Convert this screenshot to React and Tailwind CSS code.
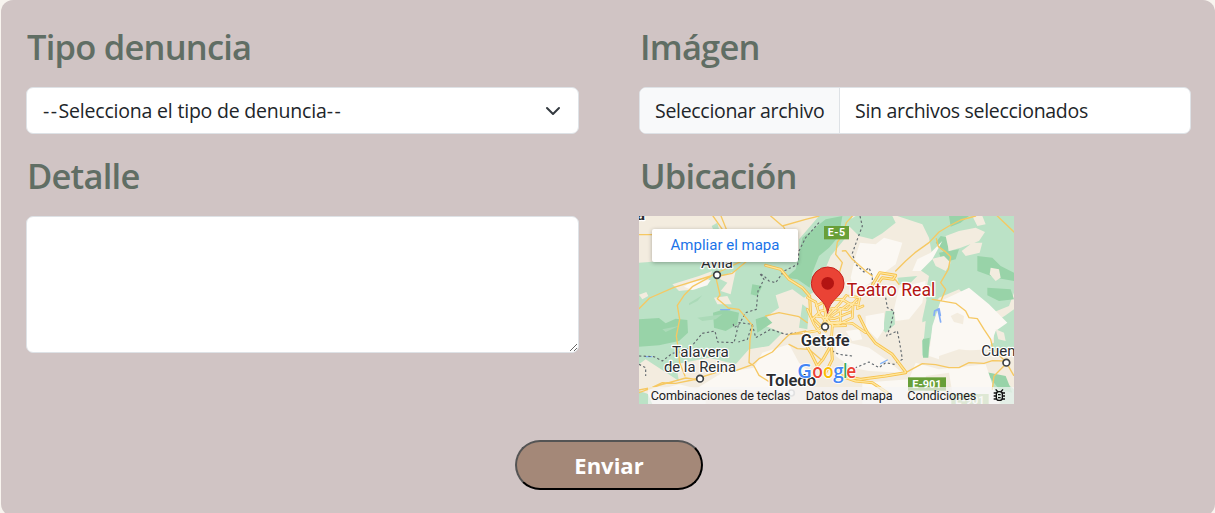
const roads = [
  "M222 0 L250 40 M246 0 L262 40 M0 56 H60 M395 0 L430 30 L500 10 L540 0 M432 30 L450 60",
  "M0 278 L32 246 L105 214 L215 180 L330 125 M232 190 L243 237 L235 248 L268 276 L300 280 L340 328 L333 372 L330 440 L345 450 L360 478 L395 500",
  "M215 182 L160 212 L135 238 L115 268 L122 310 L112 360 L118 400 L122 440 L138 480",
  "M0 522 L40 514 L70 500 L110 502 L160 492 L230 470 L290 464 L340 446 L360 428 L400 408 L430 376 L450 356 L500 345",
  "M0 530 L60 508 L140 486 L180 492 M380 300 L420 290 L480 302 L505 320 M450 356 L500 352 L520 345 M450 385 L475 398 L510 400 L545 430",
  "M640 0 L622 20 L610 60 L595 78 L590 115 L610 140 L598 180 L585 200",
  "M610 105 L620 104 L640 130 L680 165 L700 180 M740 185 L770 192 L780 205",
  "M1010 0 L965 12 L930 30 L900 48 L870 80 L828 110 L800 135 L770 165 M892 68 L898 92 L918 106 L935 122 L928 160 L905 200 L920 220 L907 252",
  "M880 250 L950 262 L980 285 L990 305 L1015 308 L1035 340 L1055 370 L1062 400 L1095 432",
  "M800 470 L850 443 L890 446 L930 455 L960 455 L990 440 L1035 442 L1060 434 L1095 435 M1100 445 L1065 480 L1060 520 M1105 445 L1124 478 M1075 0 L1125 48",
  "M240 180 L280 172 L330 130",
];

const trunks = [
  "M380 148 L425 160 L450 190 L490 215 L512 240 L515 300 L560 345",
  "M700 208 L722 170 L770 178 L762 190 L730 185 L708 215",
  "M660 300 L685 350 L710 382 L760 415 L800 468",
  "M800 470 L740 480 L665 490 L600 478 M600 478 L650 495 L700 500 L745 530",
  "M575 362 L580 430 L560 470 M575 390 L552 430 L535 450",
  "M535 450 L515 410 L500 385",
];

const ring = [
  "M505 245 L530 258 L540 292 L562 318 L600 324 L640 305 L642 270 L610 250 L565 252 L532 270",
  "M520 310 L545 285 L580 278 L625 280 L654 250 M545 335 L568 298 L600 265 L622 238",
  "M500 350 L530 345 L560 325 L595 318 L640 322 L680 350 M530 300 L585 308 L635 288",
  "M556 264 L560 305 L584 330 L620 329 M604 277 L604 322 M578 300 L630 263 L655 265",
  "M630 240 L662 245 L655 278 L672 270 M505 280 L525 325 L542 350 M580 330 L576 390",
];

const borders = [
  "M540 20 L500 65 L480 105 L476 145 L435 165 L410 200 L390 195 L375 180 L362 172 L375 190 L357 225 L352 280 L320 290 L300 325 L285 335 L282 320",
  "M663 0 L670 30 L655 70 L640 112 L650 145 L675 168 L690 155 L700 180 L700 205",
  "M740 245 L745 275 L765 285 L755 330 L743 360 L775 345 L782 380 L790 430 L765 445 L740 440 L720 455 L690 438 L650 455",
  "M0 420 L45 422 L70 435 L100 412 L140 404 L165 382 L190 352 L228 345 L236 378 L285 380 L300 320 L340 325 L350 365 L395 340 L440 355 L470 350 M545 380 L570 400 L600 415 L640 420",
  "M340 325 L325 370 L298 378 M0 445 L20 455 L20 480",
];

const darkGreens = [
  "M0 310 L60 306 L80 322 L110 308 L145 312 L147 350 L120 375 L60 388 L0 392 Z",
  "M222 290 L255 280 L300 290 L295 325 L260 345 L225 335 Z",
  "M490 65 L560 10 L610 0 L600 60 L570 95 L540 120 L520 170 L512 215 L475 190 L440 185 L470 160 L480 120 Z",
  "M340 205 L370 210 L355 240 L335 235 Z",
  "M900 110 L960 100 L950 130 L910 140 Z",
  "M1015 120 L1060 125 L1085 150 L1125 170 V195 L1070 185 L1015 165 Z",
  "M1045 215 L1115 220 L1125 250 L1080 255 L1045 238 Z",
  "M930 0 H990 L965 20 L935 32 Z",
  "M905 60 L930 65 L925 120 L890 80 Z",
  "M850 370 L872 365 L868 425 L852 425 Z",
  "M1040 468 L1100 480 L1120 530 L1080 520 Z",
  "M350 310 L380 300 L400 320 L355 350 Z",
];

const greens = [
  "M0 140 L70 135 L240 130 L375 128 L480 128 L480 70 L540 0 H640 L620 65 L575 120 L550 180 L530 225 L495 245 L460 220 L410 238 L420 275 L385 300 L380 330 L430 350 L390 390 L330 400 L290 445 L210 425 L110 445 L120 495 L20 430 L0 445 Z",
  "M775 0 H1125 V230 L1110 270 L1060 290 L1000 260 L960 220 L900 245 L875 280 L858 240 L870 180 L840 160 L880 120 L870 65 L850 25 Z",
  "M620 20 L650 0 H760 L770 20 L730 52 L700 70 L660 60 Z",
  "M218 30 L235 20 L240 40 L225 46 Z",
  "M865 240 L905 255 L885 320 L870 395 L850 420 L850 310 Z",
  "M740 285 L765 285 L768 325 L740 350 L732 342 Z",
  "M775 185 L835 180 L810 205 L780 205 Z",
  "M1065 320 L1100 298 L1125 280 V400 L1050 405 L1050 385 L1065 380 Z",
  "M490 265 L510 280 L505 340 L480 335 Z",
  "M1035 470 L1070 475 L1125 520 V564 H1085 L1065 520 Z",
  "M0 525 L30 535 L45 564 H0 Z",
];

const pales = [
  "M135 212 L160 196 L215 192 L205 208 L160 222 Z",
  "M663 80 L710 85 L735 65 L790 80 L770 145 L715 185 L650 230 L635 185 L650 120 Z",
  "M835 130 L875 110 L910 75 L880 130 L845 165 L820 165 Z",
  "M780 215 L860 195 L850 260 L810 310 L770 315 L765 280 Z",
  "M905 255 L990 215 L1050 265 L1105 320 L1070 345 L1050 400 L960 405 L900 430 L870 420 L880 330 Z",
  "M680 300 L735 290 L735 340 L715 370 L680 335 Z",
  "M370 410 L450 385 L480 440 L520 475 L450 530 L290 520 L160 525 L250 470 L345 455 Z",
  "M590 370 L690 395 L740 430 L790 470 L690 465 L640 455 L590 420 Z",
  "M670 500 L810 490 L830 440 L900 460 L1040 445 L1080 564 H670 Z",
  "M25 530 L120 505 L200 525 V564 H40 Z",
  "M620 345 L660 340 L670 370 L640 375 Z",
];

const beiges = [
  "M235 185 L290 165 L275 235 L245 225 L265 200 Z",
  "M225 245 L265 240 L278 265 L235 265 Z",
  "M0 236 L22 228 L28 240 L10 250 Z",
  "M100 205 L180 180 L220 165 L205 200 L170 220 L120 225 Z",
  "M740 50 L810 20 L850 45 L850 80 L780 90 L735 80 Z",
  "M920 60 L960 45 L1010 35 L1038 48 L1020 75 L965 95 L930 105 Z",
  "M968 105 L1000 80 L1030 80 L1022 110 L980 120 Z",
  "M880 128 L915 120 L935 140 L920 165 L890 150 Z",
  "M1055 155 L1080 160 L1085 185 L1070 195 L1052 175 Z",
  "M1000 0 L1030 0 L1040 25 L1015 30 Z",
];

const beigesOnPale = [
  "M735 370 L780 345 L860 315 L855 365 L815 425 L770 430 Z",
  "M935 300 L955 290 L975 300 L972 325 L945 318 Z",
  "M900 420 L960 400 L1045 410 L1040 435 L960 455 L900 448 Z",
  "M1070 340 L1095 350 L1100 375 L1078 370 Z",
  "M860 480 L930 470 L940 530 L870 520 Z",
];

const label = { paintOrder: "stroke", strokeLinejoin: "round" };

function MapDrawing() {
  return (
    <svg viewBox="0 0 1125 564" className="block h-full w-full" fill="none" strokeLinejoin="round" strokeLinecap="round">
      <rect width="1125" height="564" fill="#f3ecdf" />
      <path d={greens.join(" ")} fill="#bbe2c6" />
      <path d={darkGreens.join(" ")} fill="#98d3a8" />
      <path d={beiges.join(" ")} fill="#f3ecdf" />
      <path d={pales.join(" ")} fill="#fbf8f3" />
      <path d={beigesOnPale.join(" ")} fill="#f3ecdf" />
      <path d="M150 262 L190 238 L175 255 L150 268 Z M175 305 L250 295 L230 310 L190 315 Z M70 340 L120 330 L80 348 Z" fill="#abdab8" />
      <path d="M245 281 H272 M22 422 H38 M725 443 L745 432" stroke="#82b1f5" strokeWidth="4" />
      <path d="M885 298 L887 285 L900 278 L904 298 M897 280 L905 318" stroke="#84adf6" strokeWidth="5" />
      <path d={borders.join(" ")} stroke="#646b70" strokeWidth="3.5" strokeDasharray="7 7" strokeLinecap="butt" />
      <path d={roads.join(" ")} stroke="#f6c862" strokeWidth="4" />
      <path d={trunks.join(" ")} stroke="#f6c04a" strokeWidth="9" />
      <path d={trunks.join(" ")} stroke="#ffe69b" strokeWidth="4" />
      <path d={ring.join(" ")} stroke="#f6c04a" strokeWidth="8" />
      <path d={ring.join(" ")} stroke="#ffe9a8" strokeWidth="4" />

      <rect x="555" y="30" width="75" height="40" fill="#689f38" />
      <text x="592.5" y="61" textAnchor="middle" textLength="52" className="fill-white text-[32px] font-bold">E-5</text>
      <rect x="807" y="484" width="114" height="40" fill="#689f38" />
      <text x="864" y="516" textAnchor="middle" className="fill-white text-[33px] font-bold" textLength="88">E-901</text>
      <rect x="937" y="534" width="112" height="30" fill="#a7c98a" />
      <text x="993" y="564" textAnchor="middle" className="fill-white text-[33px] font-bold" textLength="88">E-901</text>

      <g stroke="#3c4043" strokeWidth="5" fill="#fff">
        <circle cx="234" cy="177" r="10" />
        <circle cx="183" cy="488" r="10" />
        <circle cx="558" cy="332" r="10" />
        <circle cx="1102" cy="440" r="10" />
        <circle cx="457" cy="531" r="9" stroke="#b5b5b5" />
      </g>
      <g style={label} stroke="#fff" strokeWidth="7" fill="#2b2d30" className="text-[45px]">
        <text x="-7" y="11" className="text-[46px] font-bold">a</text>
        <text x="186" y="155" textLength="96" lengthAdjust="spacingAndGlyphs">Ávila</text>
        <text x="99" y="423" textLength="170" lengthAdjust="spacingAndGlyphs">Talavera</text>
        <text x="75" y="467" textLength="216" lengthAdjust="spacingAndGlyphs">de la Reina</text>
        <text x="485" y="389" textLength="147" lengthAdjust="spacingAndGlyphs" className="text-[48px] font-semibold">Getafe</text>
        <text x="381" y="509" textLength="150" lengthAdjust="spacingAndGlyphs" className="text-[48px] font-semibold">Toledo</text>
        <text x="1027" y="419">Cuenca</text>
      </g>
      <text x="623" y="240" textLength="266" lengthAdjust="spacingAndGlyphs" style={label} stroke="#fff" strokeWidth="8" fill="#b31412" className="text-[55px]">Teatro Real</text>

      <path d="M566 291 C562 248 517 243 517 202 A49 49 0 0 1 615 202 C615 243 570 248 566 291 Z" fill="#ea4335" stroke="#c5221f" strokeWidth="3" />
      <circle cx="566" cy="202" r="19" fill="#b31412" />

      <g style={label} stroke="#fff" strokeWidth="5" className="font-['Open_Sans',sans-serif] text-[57px] font-semibold">
        <text x="475" y="485" fill="#4285f4" textLength="44" lengthAdjust="spacingAndGlyphs">G</text>
        <text x="520" y="485" fill="#ea4335" textLength="32" lengthAdjust="spacingAndGlyphs">o</text>
        <text x="552" y="485" fill="#fbbc04" textLength="32" lengthAdjust="spacingAndGlyphs">o</text>
        <text x="583" y="485" fill="#4285f4" textLength="31" lengthAdjust="spacingAndGlyphs">g</text>
        <text x="613" y="485" fill="#34a853" textLength="12" lengthAdjust="spacingAndGlyphs">l</text>
        <text x="622" y="485" fill="#ea4335" textLength="30" lengthAdjust="spacingAndGlyphs">e</text>
      </g>

      <path d="M27 513 H1125 V564 H27 Z" fill="#f5f5f5" fillOpacity=".7" />
      <g fill="#1b1b1b" className="text-[38px]">
        <text x="35" y="552" textLength="419">Combinaciones de teclas</text>
        <text x="500" y="552" textLength="261">Datos del mapa</text>
        <text x="805" y="552" textLength="207">Condiciones</text>
      </g>
      <g stroke="#111" strokeWidth="4" strokeLinecap="butt">
        <rect x="1072" y="527" width="18" height="26" rx="8" />
        <path d="M1070 520 L1077 528 M1092 520 L1085 528 M1064 531 H1073 M1064 540 H1073 M1064 549 H1073 M1089 531 H1098 M1089 540 H1098 M1089 549 H1098 M1077 536 H1085 M1077 545 H1085" />
      </g>
    </svg>
  );
}

function Heading({ children }) {
  return (
    <h2 className="-mt-px mb-[19px] h-[42px] whitespace-nowrap pl-px text-[34.5px] leading-[42px] font-semibold tracking-[-0.78px] text-[#606e64]">
      {children}
    </h2>
  );
}

export default function App() {
  return (
    <main className="h-[513px] overflow-hidden bg-[#f8f4ef] pl-px font-['Open_Sans','Noto_Sans',sans-serif] text-[#212529]">
      <form className="flex h-[516px] flex-col items-center rounded-xl bg-[#d0c4c4] pt-[27px] pr-[24px] pl-[25px]">
        <div className="grid w-full grid-cols-[553px_552px] justify-between">
          <section>
            <Heading>Tipo denuncia</Heading>
            <div className="flex h-[47px] items-center justify-between rounded-[7px] border border-[#dee2e6] bg-white pr-[17px] pl-4">
              <span className="text-[19.5px] tracking-[-0.2px] whitespace-nowrap">
                <span className="tracking-[1.5px]">--</span>Selecciona el tipo de denuncia<span className="tracking-[1.5px]">--</span>
              </span>
              <svg viewBox="0 0 16 16" className="size-4" fill="none" stroke="#343a40" strokeWidth="2" strokeLinecap="round" strokeLinejoin="round">
                <path d="m2 5 6 6 6-6" />
              </svg>
            </div>
          </section>
          <section>
            <Heading>Imágen</Heading>
            <div className="flex h-[47px] overflow-hidden rounded-[7px] border border-[#dee2e6] bg-white text-[19.5px] leading-[45px] tracking-[-0.3px] whitespace-nowrap">
              <span className="w-[200px] border-r border-[#dee2e6] bg-[#f8f9fa] pl-[15px]">Seleccionar archivo</span>
              <span className="pl-[15px]">Sin archivos seleccionados</span>
            </div>
          </section>
          <section className="pt-[22px]">
            <Heading>Detalle</Heading>
            <textarea className="block h-[137px] w-full resize rounded-[7px] border border-[#dee2e6] bg-white px-4 py-2 text-xl outline-none" />
          </section>
          <section className="pt-[22px]">
            <Heading>Ubicación</Heading>
            <div className="relative h-[188px] w-[375px] overflow-hidden font-[Roboto,sans-serif]">
              <MapDrawing />
              <a className="absolute top-[13px] left-[13px] flex h-[33px] w-[146px] items-center justify-center rounded-[2px] bg-white text-[15px] text-[#1a73e8] shadow-[0_1px_4px_rgba(0,0,0,0.3)]">
                Ampliar el mapa
              </a>
            </div>
          </section>
        </div>
        <button type="button" className="mt-9 ml-[1px] h-[50px] w-[188px] rounded-full border-2 [border-style:outset] border-black bg-[#a48878] text-[22px] leading-none font-bold text-white">
          Enviar
        </button>
      </form>
    </main>
  );
}
